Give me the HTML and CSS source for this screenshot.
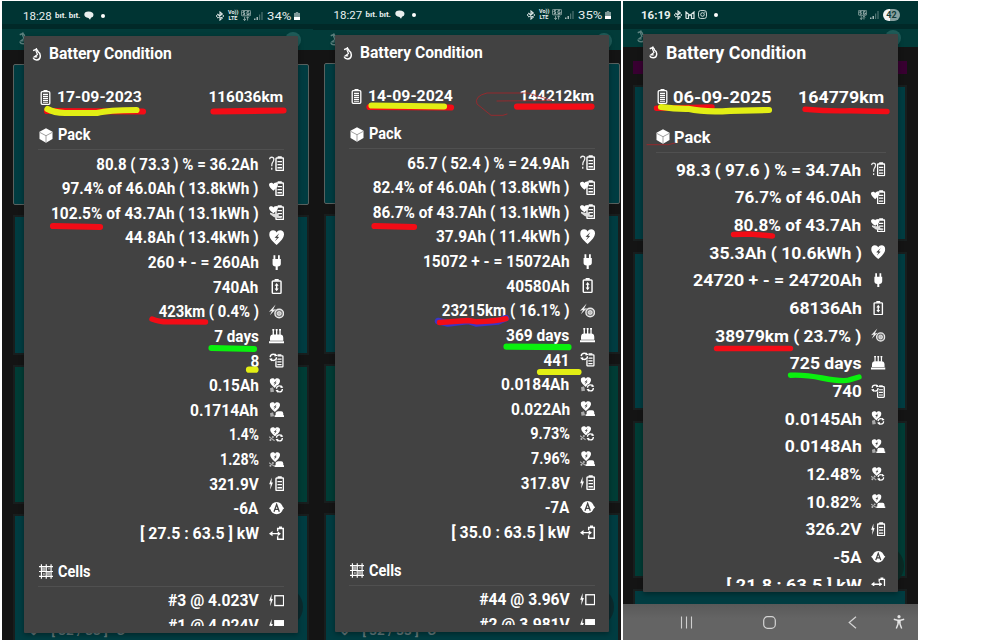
FILE: index.html
```html
<!DOCTYPE html>
<html lang="en">
<head>
<meta charset="utf-8">
<title>Battery Condition</title>
<link rel="stylesheet" href="styles.css">
</head>
<body>
<svg class="defs" width="0" height="0">
  <symbol id="bat" viewBox="0 0 9 15" preserveAspectRatio="none"><path d="M2.500 .2h4v1.800h-4z" fill="#fff"/><rect x=".8" y="2" width="7.4" height="12.2" rx=".8" fill="none" stroke="#fff" stroke-width="1.5"/><path d="M2.300 5.500h4.400M2.300 8.500h4.400M2.300 11.500h4.400" stroke="#fff" stroke-width="1.300"/></symbol>
  <symbol id="batTall" viewBox="0 0 11 15"><path d="M3.500 0h4v1.500h-4z" fill="#fff"/><rect x="1.200" y="1.700" width="8.600" height="12.600" rx="1" fill="none" stroke="#fff" stroke-width="1.300"/><path d="M3 4.400h5M3 6.400h5M3 8.400h5M3 10.400h5M3 12.300h5" stroke="#fff" stroke-width="1.100"/></symbol>
  <symbol id="heart" viewBox="0 0 16 15" preserveAspectRatio="none"><path d="M8 14.6C3 10.500 .3 7.500 .3 4.300C.3 1.700 2 .3 4.300 .3C6 .3 7.200 1 8 2.400C8.800 1 10 .3 11.700 .3C14 .3 15.700 1.700 15.700 4.300C15.700 7.500 13 10.500 8 14.600z" fill="#fff"/><path d="M10.800 3.200L5.800 7.600L8.300 7.900L6 11.300L10.600 6.900L8.600 6.500z" fill="#424242"/></symbol>
  <symbol id="bolt" viewBox="0 0 5 12" preserveAspectRatio="none"><path d="M3.300 0L.2 6.600H2L1.400 12L4.800 4.800H3z" fill="#fff"/></symbol>
  <symbol id="cycle" viewBox="0 0 8 8"><circle cx="4" cy="4" r="2.900" fill="none" stroke="#fff" stroke-width="1.300" stroke-dasharray="7.200 1.900"/><path d="M5.400 .2L8 2.600L5 3.200zM2.600 7.800L0 5.400L3 4.800z" fill="#fff"/></symbol>
  <symbol id="hook" viewBox="0 0 10 14"><path d="M.8 2.800L4.200 1.500Q6 2.500 6 4Q8.600 5.500 8.600 8.500Q8.400 12.800 4.600 12.800Q2 12.800 .9 11" fill="none" stroke="currentColor" stroke-width="1.600"/><path d="M4.500 .2L4 3.500L5.500 7L2 9.600H5.200" fill="none" stroke="currentColor" stroke-width="1.300"/></symbol>
  <symbol id="cube" viewBox="0 0 14 15"><path d="M7 .3L13.500 3.800V11L7 14.700L.5 11V3.800z" fill="#fff"/><path d="M1 4.500L7 7.700L13 4.500M7 7.700V14" fill="none" stroke="#888" stroke-width=".8"/></symbol>
  <symbol id="grid" viewBox="0 0 15 15"><path d="M2.500 0V15M7.500 0V15M12.500 0V15M0 2.500H15M0 7.500H15M0 12.500H15" stroke="#fff" stroke-width="1.200"/><path d="M3 3h4v4H3zM8 8h4v4H8z" fill="#aaa"/><path d="M4 9h2v2H4zM9.500 4h1.500v1.500H9.500z" fill="#999"/></symbol>

  <symbol id="ask" viewBox="0 0 15 15"><path d="M.6 3.200Q.8 1.200 2.600 1.200Q4.800 1.200 4.700 3.500Q4.600 5.200 3.400 6.500Q2.700 7.400 2.700 10M2.700 11.600V13.400" fill="none" stroke="#eee" stroke-width="1.300"/><use href="#bat" x="6" width="9" height="15"/></symbol>
  <symbol id="hbat" viewBox="0 0 15 15"><use href="#bat" x="6" width="9" height="15"/><path d="M4.300 9.500C1.500 7 0 5.500 0 3.700C0 1.500 3.300 1 4.300 3C5.300 1 8.800 1.500 8.800 3.700C8.800 5.500 7 7 4.300 9.500z" fill="#fff"/></symbol>
  <symbol id="hbat2" viewBox="0 0 15 15"><use href="#bat" x="6" width="9" height="15"/><path d="M4.300 8C1.500 6 0 4.700 0 3C0 1 3.300 .6 4.300 2.400C5.300 .6 8.800 1 8.800 3C8.800 4.700 7 6 4.300 8z" fill="#fff"/><path d="M1 7.500L5 8.500H9.500V10.500L12 11.500V13L5 12L1 9z" fill="#ddd"/></symbol>
  <symbol id="plug" viewBox="0 0 15 15"><path d="M4.400 .3h1.800V4h2.600V.3h1.800V4h1V8.500Q11.500 11 8.600 11.300V15H6.500V11.300Q3.500 11 3.500 8.500V4h.9z" fill="#fff"/></symbol>
  <symbol id="flow" viewBox="0 0 15 15"><path d="M5.500 0h4v1.800h-4z" fill="#fff"/><rect x="3.200" y="1.900" width="8.600" height="12.200" rx=".8" fill="none" stroke="#fff" stroke-width="1.400"/><path d="M7.500 4L9.500 6.600H8.200V9.400H9.500L7.500 12L5.500 9.400H6.800V6.600H5.500z" fill="#fff"/></symbol>
  <symbol id="wheel" viewBox="0 0 15 15"><path d="M6.500 .5L0 7.500L3 6.800L.8 11L7 5L4 5.600z" fill="#eee"/><circle cx="10" cy="9.300" r="4.200" fill="#777" stroke="#e8e8e8" stroke-width="1.400"/><circle cx="10" cy="9.300" r="1.900" fill="#bbb" stroke="#fff" stroke-width=".7"/></symbol>
  <symbol id="cake" viewBox="0 0 15 15"><path d="M4.200 1V6M7.500 1V6M10.800 1V6" stroke="#fff" stroke-width="1.300"/><path d="M4.200 0v1.400M7.500 0v1.400M10.800 0v1.400" stroke="#fff" stroke-width="1.900"/><path d="M1 11.400V8.500Q1.200 5.500 4 5.400H11Q13.800 5.500 14 8.500V11.400zM0 12h15v2H0z" fill="#fff"/></symbol>
  <symbol id="cbat" viewBox="0 0 15 15"><use href="#bat" x="6" y="1" width="8.500" height="13.500"/><circle cx="4.300" cy="4.200" r="4.300" fill="#424242"/><use href="#cycle" x="0" y="0" width="8.500" height="8.500"/></symbol>
  <symbol id="hcyc" viewBox="0 0 15 15"><use href="#heart" x=".5" y="0" width="10.500" height="10"/><path d="M1 10L4 9L5 13.500L1.500 14z" fill="#aaa"/><circle cx="10.200" cy="10.700" r="4" fill="#424242"/><use href="#cycle" x="6.200" y="6.700" width="8" height="8"/></symbol>
  <symbol id="hcake" viewBox="0 0 15 15"><use href="#heart" x=".5" y="0" width="10.500" height="10"/><path d="M1 11L4 10L5 14L1.500 14.500z" fill="#aaa"/><path d="M6.500 13V10.500Q7 9 9 9H12Q13.800 9 14 11V13h1v1.600H5.500V13z" fill="#fff"/></symbol>
  <symbol id="pcyc" viewBox="0 0 15 15"><use href="#heart" x="1" y="0" width="10" height="9.500"/><path d="M0 9.500L5.500 13.500" stroke="#aaa" stroke-width="1.200"/><circle cx="3.800" cy="9.800" r="1" fill="#bbb"/><circle cx="1.400" cy="12.700" r="1" fill="#bbb"/><circle cx="10.200" cy="10.700" r="4" fill="#424242"/><use href="#cycle" x="6.200" y="6.700" width="8" height="8"/></symbol>
  <symbol id="pcake" viewBox="0 0 15 15"><use href="#heart" x="1" y="0" width="10" height="10"/><path d="M0 10.500L5.500 14" stroke="#aaa" stroke-width="1.200"/><circle cx="3.800" cy="10.700" r="1" fill="#bbb"/><circle cx="1.400" cy="13.400" r="1" fill="#bbb"/><path d="M6.500 13V10.500Q7 9 9 9H12Q13.800 9 14 11V13h1v1.600H5.500V13z" fill="#fff"/></symbol>
  <symbol id="volt" viewBox="0 0 15 15"><use href="#bolt" x="0" y="1.500" width="4" height="12"/><use href="#bat" x="6" width="9" height="15"/></symbol>
  <symbol id="amp" viewBox="0 0 15 15"><circle cx="7.500" cy="7" r="6" fill="#fff"/><path d="M0 7L2.500 5V9zM15 7L12.500 5V9z" fill="#fff"/><path d="M4.900 10.500L7.500 3.400L10.100 10.500M5.900 8.200H9.100" fill="none" stroke="#424242" stroke-width="1.300"/></symbol>
  <symbol id="power" viewBox="0 0 15 15"><path d="M8.500 5V2.500H14V13H8.500V10M9.800 1.200H12.800" fill="none" stroke="#fff" stroke-width="1.400"/><path d="M2 7.500H11" stroke="#fff" stroke-width="1.300"/><path d="M0 7.500L3.500 5V10zM11.500 7.500L8.500 5V10z" fill="#fff"/></symbol>
  <symbol id="cellLow" viewBox="0 0 15 15"><use href="#bolt" x="0" y="1" width="4" height="12"/><rect x="5.700" y="2.700" width="8.600" height="9.600" fill="none" stroke="#fff" stroke-width="1.300"/></symbol>
  <symbol id="cellHigh" viewBox="0 0 15 15"><use href="#bolt" x="0" y="1" width="4" height="12"/><rect x="5" y="2" width="10" height="11" fill="#fff"/></symbol>

  <symbol id="bt" viewBox="0 0 8 10"><path d="M1.300 3L6.300 7L4 9V1L6.300 3L1.300 7" fill="none" stroke="#dde7e6" stroke-width="1.100"/><path d="M0 5h1.300M6.700 5H8" stroke="#dde7e6" stroke-width="1.300"/></symbol>
  <symbol id="net" viewBox="0 0 10 11"><rect x=".4" y=".4" width="9.200" height="5.400" rx="1" fill="none" stroke="#a9bcba" stroke-width=".8"/><path d="M4 1.700H2V3H3.600V4.600H1.800M8.200 1.700H6V4.600H8.200V3.200H7.200" fill="none" stroke="#c9d5d4" stroke-width=".8"/><path d="M3.600 6.800V10.500M2.300 9L3.600 10.500L4.900 9M6.600 10.500V6.800M5.300 8.200L6.600 6.800L7.900 8.200" fill="none" stroke="#a9bcba" stroke-width=".8"/></symbol>
  <symbol id="sig" viewBox="0 0 9 8"><path d="M.8 6.500V8M3.200 5V8" stroke="#cfdad9" stroke-width="1.200"/><path d="M5.600 2.500V8M8 0V8" stroke="#4f7472" stroke-width="1.200"/></symbol>
  <symbol id="cell" viewBox="0 0 6 8"><path d="M1.800 0h2.400v1H6V8H0V1h1.800z" fill="#7f9998"/><path d="M0 5h6v3H0z" fill="#fff"/></symbol>
  <symbol id="chat" viewBox="0 0 10 9"><path d="M4.500 .5Q9.500 .5 9.500 4Q9.500 6.200 7 6.800L6 8.800L4.500 7Q.3 6.500 .3 3.600Q.3 .6 4.500 .5z" fill="#e9efee"/></symbol>
  <symbol id="mail" viewBox="0 0 10 8"><path d="M1 7.500V1L5 4.500L9 1V7.500H6.500V4M3.500 4V7.500H1" fill="none" stroke="#dfe8e7" stroke-width="1.200"/></symbol>
  <symbol id="cam" viewBox="0 0 10 10"><rect x=".6" y=".6" width="8.800" height="8.800" rx="2.400" fill="none" stroke="#dfe8e7"/><circle cx="5" cy="5" r="2" fill="none" stroke="#dfe8e7"/><circle cx="7.600" cy="2.400" r=".6" fill="#dfe8e7"/></symbol>
</svg>

<main class="board" id="board"></main>

<svg class="marks" viewBox="0 0 1000 640" width="1000" height="640">
  <g class="red">
    <path d="M47 111L143 111.500"/><path d="M213.500 111.500L283.500 110.500"/><path d="M53 226L100 227"/>
    <path d="M369.500 107L451 107.500"/><path d="M517 106.600H591.500"/><path d="M374.500 226L414 227"/>
  </g>
  <path class="blue" d="M438 321L448 323.500L468 321L476 323.500L498 321.500L506 318"/>
  <g class="red fine">
    <path d="M152 319Q160 322.500 172 321.800L205.500 322"/>
    <path d="M439.500 322.500L468 320.500L477 321.800Q495 321.500 506 318.700"/>
    <path d="M656.500 108.300L712 107"/><path d="M805 109.200Q830 111.500 850 110.700L887 111.500"/>
    <path d="M733.500 234.500L750 234L772.500 236"/><path d="M716.500 348.500H790.500"/>
  </g>
  <g class="yellow">
    <path d="M47.500 109Q54 112.800 65 113H97Q108 110 136.500 110"/><path d="M371.500 105.500L410 106L444 106.500"/>
    <path d="M661 107Q675 109 688 108.800Q705 112.500 730 110.800L769 110"/><path d="M249 369.700H255.500"/><path d="M540 372H578.500"/>
  </g>
  <g class="green">
    <path d="M211.500 348L254 349"/><path d="M506.500 346.700L568.500 347.200"/><path d="M790.500 375.200Q805 374.500 822 378Q846 382.500 851 379.300L859 377"/>
  </g>
  <g class="scrawl"><path d="M507 114L503 115.300H491L477 104Q474 96 487 93H528L552 100.500L497 101"/><path d="M647 144.700H668L675 143"/></g>
</svg>
<script src="app.js"></script>
</body>
</html>
```
FILE: styles.css
```css
* { box-sizing: border-box; }
body {
  margin: 0;
  width: 1000px;
  height: 640px;
  overflow: hidden;
  background: #fff;
  font-family: Roboto, "Noto Sans", sans-serif;
  position: relative;
}
svg { display: block; flex: none; }
.defs { position: absolute; }
.board { display: flex; height: 640px; padding: 1px 0 0 2px; }

.phone {
  position: relative;
  overflow: hidden;
  width: 311px;
  height: 639px;
  flex: none;
  background: #141414;
  --fs: 16px;
  --title: 16.6px;
  --date: 15.4px;
  --lh: 24px;
  --row: 24.63px;
}
.second { width: 307.5px; }
.third {
  width: 295px;
  margin-left: 2.5px;
  --fs: 17.3px;
  --title: 17.6px;
  --date: 17.2px;
  --lh: 26px;
  --row: 27.68px;
}

.status {
  display: flex;
  align-items: center;
  height: 23px;
  padding: 6px 13.500px 0 21px;
  background: #003433;
  color: #e9f0ef;
  font-size: 11.5px;
}
.second .status { padding: 4px 10px 0 20.500px; }
.third .status { padding: 4px 18px 0 18px; }
.status .clock { width: 32px; }
.third .clock { font-weight: 700; width: 33px; }
.app-note { width: 29px; font-size: 8px; font-weight: 700; white-space: nowrap; }
.dot { width: 4px; height: 4px; border-radius: 50%; background: #fff; margin-left: 7px; }
.spacer { flex: 1; }
.gap { width: 3px; }
.volte { width: 10px; margin: 0 3px 0 4px; font-size: 5.5px; line-height: 5.500px; font-weight: 700; text-align: center; }
.sig { margin: 0 4px 0 3px; }
.pct { width: 26.500px; }
.pill {
  width: 17px; height: 12px; border-radius: 6px;
  background: linear-gradient(90deg, #f2f5f5 42%, #87a09f 42%);
  color: #123b39; font-size: 9px; line-height: 12px; font-weight: 700; text-align: center;
}
.strip { height: 5px; background: #012928; }
.appbar {
  display: flex;
  justify-content: space-between;
  height: 21px;
  padding: 3px 12px 0 17px;
  background: #023b39;
  color: #5f8381;
}
.second .appbar { padding-right: 8.500px; height: 20px; }
.second .strip { height: 6px; }
.third .appbar { height: 18px; padding: 1px 17px 0 14px; }
.knob { width: 16px; height: 16px; border-radius: 50%; background: #1f5c59; }

.tiles { display: grid; gap: 10px; padding: 14px 0 0 11px; width: 307px; grid-template-rows: 141px 140px 139px 140px; }
.second .tiles { padding-top: 13px; }
.third .tiles { width: 284px; padding: 14px 0 0 10px; grid-template-rows: 13px 156px 158px 157px 40px; gap: 11px; }
.tile { background: #003c41; border: 2px solid #181e1e; }
.tile.lit { border: 1.500px solid #59615f; border-radius: 2px; }
.tile.green { background: #003c35; }
.tile.plum { background: #380031; border: 0; }
.ghost { position: absolute; left: 26px; top: 622px; width: 97px; height: 16px; font-size: 13px; line-height: 16px; font-weight: 700; color: #63797b; white-space: nowrap; }
.fab { position: absolute; right: 10px; width: 40px; height: 40px; border-radius: 50%; background: #0b2a2d; top: 586px; }
.second .fab { right: 6.500px; }
.third .fab { top: 545px; right: 14px; background: #0a2a25; }

.dialog {
  position: absolute;
  left: 22px;
  top: 35px;
  width: 274px;
  height: 596.500px;
  padding: 6.400px 14px 7px;
  background: #424242;
  color: #fff;
  font-weight: 700;
  box-shadow: 0 2px 5px rgba(0,0,0,.35);
  border-radius: 1px;
}
.second .dialog { top: 34px; }
.third .dialog { left: 20px; top: 32.500px; width: 255px; height: 558px; padding: 6.300px 12.500px 6px; }
.scroll { height: 100%; overflow: hidden; margin-left: -8px; padding-left: 8px; }
.title { display: flex; align-items: center; gap: 7px; margin-left: -6.500px; height: var(--lh); font-size: var(--title); line-height: var(--lh); }
.dates { display: flex; align-items: center; margin: 19px 1px 0 1.500px; height: var(--lh); font-size: var(--date); line-height: var(--lh); }
.dates svg { margin-right: 6.500px; }
.third .title { gap: 7.500px; }
.third .dates { margin-top: 18.200px; }
.third .dates svg { margin-right: 4.500px; }
.head { display: flex; align-items: center; gap: 5px; margin-top: 13.800px; height: calc(var(--lh) + 3px); padding: 0 0 2px 1px; border-bottom: 1px solid #505050; font-size: var(--fs); line-height: var(--lh); }
.rows + .head { margin-top: 13.200px; padding-left: .5px; }
.third .head { margin-top: 13.800px; padding-left: 0; gap: 4.500px; }
.rows { padding-top: 2.400px; }
.head ~ .head + .rows { padding-top: 2.700px; }
.third .rows { padding-top: 3.800px; }
.row { display: flex; align-items: center; justify-content: flex-end; height: var(--row); font-size: var(--fs); line-height: var(--row); }
.row svg { margin: -2px 0 0 10px; }
.third .row svg { margin-left: 9.500px; }
.fit { display: inline-block; white-space: nowrap; transform-origin: left center; }
.fit.end { transform-origin: right center; }
.dates .end { margin-left: auto; }

.nav { position: absolute; left: 0; bottom: 0; width: 295px; height: 36px; background: linear-gradient(#595959, #646464 40%); display: flex; align-items: center; padding-left: 57px; }
.nav svg:nth-child(2) { margin-left: 70px; }
.nav svg:nth-child(3) { margin-left: 72px; }
.nav svg:nth-child(4) { margin-left: 36px; }

.marks { position: absolute; left: 0; top: 0; fill: none; stroke-linecap: round; stroke-linejoin: round; }
.red, .green, .yellow { stroke-width: 6.200px; }
.red { stroke: #f30c16; }
.red.fine { stroke-width: 5.400px; }
.yellow { stroke: #e2ee14; }
.green { stroke: #0af00e; }
.green path:last-child { stroke-width: 5.400px; }
.blue { stroke: #3a35c8; stroke-width: 6.500px; }
.scrawl { stroke: #a82429; stroke-width: .8px; }
```
FILE: app.js
```js
const rowIcons = ['ask', 'hbat', 'hbat2', 'heart', 'plug', 'flow', 'wheel', 'cake', 'cbat', 'hcyc', 'hcake', 'pcyc', 'pcake', 'volt', 'amp', 'power'];

const phones = [
  {
    cls: 'first', clock: '18:28', charge: '34%', title: 122.5, pack: 32.7,
    date: ['17-09-2023', 85], km: ['116036km', 75],
    rows: [['80.8 ( 73.3 ) % = 36.2Ah', 161.7], ['97.4% of 46.0Ah ( 13.8kWh )', 196.3], ['102.5% of 43.7Ah ( 13.1kWh )', 208], ['44.8Ah ( 13.4kWh )', 134], ['260 + - = 260Ah', 111.3], ['740Ah', 45], ['423km ( 0.4% )', 100.3], ['7 days', 44.7], ['8', 8.6], ['0.15Ah', 50], ['0.1714Ah', 68], ['1.4%', 30], ['1.28%', 39], ['321.9V', 49.7], ['-6A', 24.7], ['[ 27.5 : 63.5 ] kW', 119]],
    cells: [['#3 @ 4.023V', 91], ['#1 @ 4.024V', 91]]
  },
  {
    cls: 'second', clock: '18:27', charge: '35%', title: 122.5, pack: 32.7,
    date: ['14-09-2024', 85], km: ['144212km', 75],
    rows: [['65.7 ( 52.4 ) % = 24.9Ah', 161.7], ['82.4% of 46.0Ah ( 13.8kWh )', 196.3], ['86.7% of 43.7Ah ( 13.1kWh )', 196.3], ['37.9Ah ( 11.4kWh )', 134], ['15072 + - = 15072Ah', 147], ['40580Ah', 63.7], ['23215km ( 16.1% )', 127.3], ['369 days', 63], ['441', 26.5], ['0.0184Ah', 68], ['0.022Ah', 59], ['9.73%', 39.7], ['7.96%', 39], ['317.8V', 49.3], ['-7A', 24.3], ['[ 35.0 : 63.5 ] kW', 118.7]],
    cells: [['#44 @ 3.96V', 90.7], ['#2 @ 3.981V', 90.7]]
  },
  {
    cls: 'third', clock: '16:19', title: 140, pack: 37,
    date: ['06-09-2025', 98], km: ['164779km', 86],
    rows: [['98.3 ( 97.6 ) % = 34.7Ah', 185], ['76.7% of 46.0Ah', 126.3], ['80.8% of 43.7Ah', 127.3], ['35.3Ah ( 10.6kWh )', 152.7], ['24720 + - = 24720Ah', 169], ['68136Ah', 72.7], ['38979km ( 23.7% )', 145.7], ['725 days', 71.3], ['740', 29.5], ['0.0145Ah', 77.3], ['0.0148Ah', 77.3], ['12.48%', 54.7], ['10.82%', 54.7], ['326.2V', 56], ['-5A', 28], ['[ 21.8 : 63.5 ] kW', 135.7]]
  }
];

const icon = (id, w, h, cls = '') => `<svg class="${cls}" width="${w}" height="${h}"><use href="#${id}"/></svg>`;
const fit = (text, width, end) => `<span class="fit ${end ? 'end' : ''}" data-width="${width}">${text}</span>`;
const row = ([text, width], id, size) => `<div class="row">${fit(text, width, true)}${icon(id, size, size)}</div>`;

function status(p) {
  if (!p.charge) {
    return `<span class="clock">${p.clock}</span>${icon('bt', 8, 10)}<i class="gap"></i>${icon('mail', 10, 8)}<i class="gap"></i>${icon('cam', 9, 9)}<i class="dot"></i><i class="spacer"></i>${icon('net', 9, 10)}${icon('sig', 9, 8, 'sig')}<span class="pill">42</span>`;
  }
  return `<span class="clock">${p.clock}</span><span class="app-note">bıt. bıt.</span>${icon('chat', 10, 9)}<i class="dot"></i><i class="spacer"></i>${icon('bt', 8, 10)}<span class="volte">Vo))<br>LTE</span>${icon('net', 10, 11)}${icon('sig', 9, 8, 'sig')}<span class="pct">${fit(p.charge, 24)}</span>${icon('cell', 6, 8)}`;
}

function phone(p) {
  const big = p.cls === 'third';
  const size = big ? 14.5 : 15.3;
  const tiles = big
    ? '<div class="tile plum"></div><div class="tile"></div><div class="tile"></div><div class="tile green"></div><div class="tile"></div>'
    : '<div class="tile lit"></div><div class="tile"></div><div class="tile green"></div><div class="tile"></div>';
  const ghost = big ? '' : `<div class="ghost">${fit('⌄– [ 32 / 33 ] °C', 97)}</div>`;
  const cells = p.cells
    ? `<div class="head">${icon('grid', 14.5, 15)}${fit('Cells', 32.7)}</div><div class="rows">${row(p.cells[0], 'cellLow', size)}${row(p.cells[1], 'cellHigh', size)}</div>`
    : '';
  const nav = big
    ? `<nav class="nav">
        <svg width="13" height="13"><path d="M1.500 .5V12.500M6.500 .5V12.500M11.500 .5V12.500" stroke="#cfcfcf" stroke-width="1.100"/></svg>
        <svg width="13" height="13"><rect x=".7" y=".7" width="11.600" height="11.600" rx="3.800" fill="none" stroke="#d4d4d4" stroke-width="1.200"/></svg>
        <svg width="9" height="13"><path d="M8 .7L1.200 6.500L8 12.300" fill="none" stroke="#d4d4d4" stroke-width="1.200"/></svg>
        <svg width="12" height="14"><circle cx="6" cy="1.700" r="1.600" fill="#e4e4e4"/><path d="M.8 4.300L4.500 5.200H7.500L11.200 4.300M6 5V8.500M5 5V9L3.300 13.500M7 5V9L8.700 13.500" fill="none" stroke="#e4e4e4" stroke-width="1.400"/></svg>
      </nav>`
    : '';
  return `<section class="phone ${p.cls}">
    <div class="status">${status(p)}</div><div class="strip"></div>
    <div class="appbar">${icon('hook', 9, 13)}<i class="knob"></i></div>
    <div class="tiles">${tiles}</div><i class="fab"></i>${ghost}
    <div class="dialog"><div class="scroll">
      <div class="title">${icon('hook', big ? 9 : 10, 13)}${fit('Battery Condition', p.title)}</div>
      <div class="dates">${icon('batTall', 11, 15)}${fit(...p.date)}${fit(p.km[0], p.km[1], true)}</div>
      <div class="head">${icon('cube', 14, 15)}${fit('Pack', p.pack)}</div>
      <div class="rows">${p.rows.map((r, i) => row(r, rowIcons[i], size)).join('')}</div>${cells}
    </div></div>${nav}
  </section>`;
}

document.getElementById('board').innerHTML = phones.map(phone).join('');

// Condense or widen each label to its column width.
document.querySelectorAll('.fit').forEach(el => {
  el.style.transform = `scaleX(${el.dataset.width / el.offsetWidth})`;
});
```
